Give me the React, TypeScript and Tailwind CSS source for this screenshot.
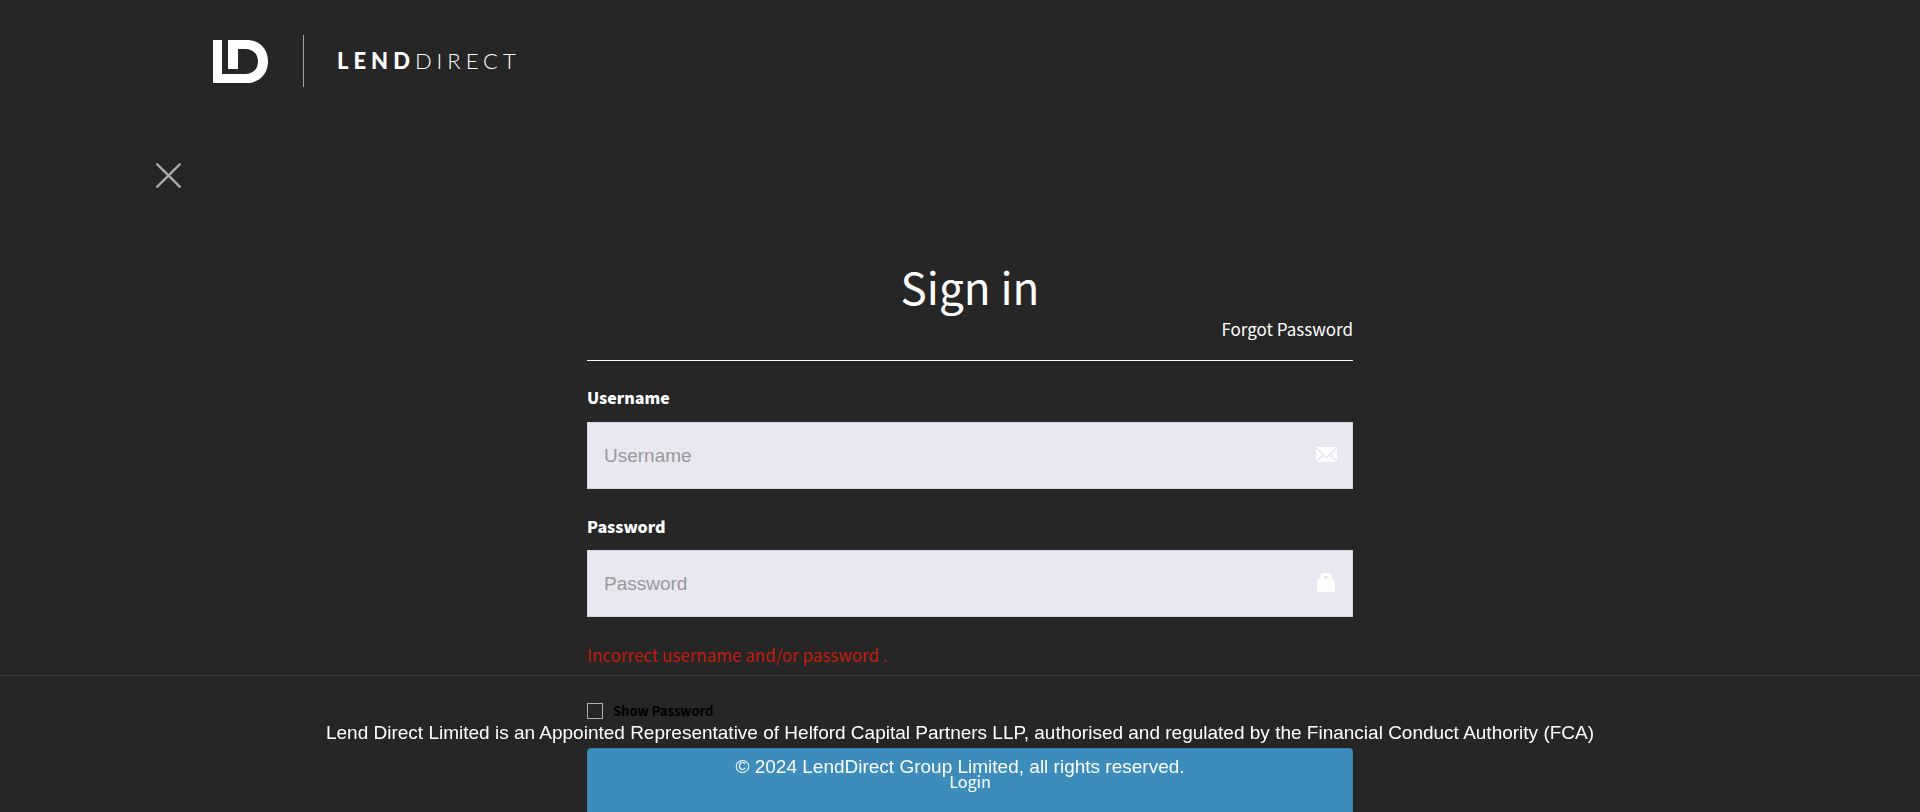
import { useState } from "react";

function Logo() {
  return (
    <a href="#home" aria-label="LendDirect home" className="flex items-center text-white">
      <svg width="55" height="43" viewBox="0 0 55 43" fill="currentColor" aria-hidden="true">
        <path d="M0 0H9V34H32C40 34 45 29 45 21.500C45 14 40 9 32 9H25V29H15V0H33.500C46.500 0 55 9 55 21.500C55 34 46.500 43 33.500 43H0Z" />
      </svg>
      <span className="ml-[35px] h-[52px] w-px bg-[#a0a0a0]" />
      <span className="ml-[33px] flex font-['Lato',sans-serif] text-[22px] leading-8">
        <span className="font-black tracking-[5px]">LEND</span>
        <span className="font-light tracking-[5px]">DIRECT</span>
      </span>
    </a>
  );
}

function MailIcon() {
  return (
    <svg width="21" height="15" viewBox="0 0 21 15" aria-hidden="true">
      <path d="M0.500 0H20.500L10.500 9.500Z M0 1.800L6.300 7.700L0 13.500Z M21 1.800L14.700 7.700L21 13.500Z M7.300 8.700L10.500 11.700L13.700 8.700L20.500 15H0.500Z" fill="white" />
    </svg>
  );
}

function LockIcon() {
  return (
    <svg width="18" height="19" viewBox="0 0 18 19" aria-hidden="true">
      <path fillRule="evenodd" d="M3 6V3.500Q3 0 6.500 0H11.500Q15 0 15 3.500V6H16.500Q18 6 18 7.500V17.500Q18 19 16.500 19H1.500Q0 19 0 17.500V7.500Q0 6 1.500 6ZM7 3Q7 3 7 3.500V6H11V3.500Q11 3 10.500 3Z" fill="white" />
    </svg>
  );
}

const inputClass =
  "h-[67px] w-full border border-[#d2d6de] bg-[#e8e8f3] pr-14 pl-4 font-['Liberation_Sans',Arial,sans-serif] text-[19px] text-[#333] outline-none placeholder:text-[#999]";

export default function App() {
  const [show, setShow] = useState(false);
  return (
    <div className="min-h-screen bg-[#262626] font-['Noto_Sans_CJK_SC',sans-serif] text-white">
      <header className="pt-[35px] pl-[213px]">
        <Logo />
      </header>
      <main className="pt-[76px]">
        <button type="button" aria-label="Close" className="ml-[156px] block">
          <svg width="25" height="25" viewBox="0 0 25 25" stroke="#a8a8a8" strokeWidth="2.5" strokeLinecap="round" aria-hidden="true">
            <path d="M1.300 1.300L23.700 23.700M23.700 1.300L1.300 23.700" />
          </svg>
        </button>
        <div className="pt-[69px] pl-5">
          <form className="mx-auto flex max-w-[766px] flex-col" onSubmit={(e) => e.preventDefault()}>
            <h1 className="text-center text-[44px] leading-[58px]">Sign in</h1>
            <div className="flex justify-end border-b border-white pb-[17px]">
              <a href="#forgot" className="text-[17px] leading-7">Forgot Password</a>
            </div>
            <label htmlFor="username" className="mt-[22px] mb-[11px] text-[16px] leading-7 font-black">Username</label>
            <div className="relative">
              <input id="username" type="text" placeholder="Username" className={inputClass} />
              <span className="pointer-events-none absolute top-[25px] right-4"><MailIcon /></span>
            </div>
            <label htmlFor="password" className="mt-[23px] mb-2.5 text-[16px] leading-7 font-black">Password</label>
            <div className="relative">
              <input id="password" type={show ? "text" : "password"} placeholder="Password" className={inputClass} />
              <span className="pointer-events-none absolute top-[23px] right-[18px]"><LockIcon /></span>
            </div>
            <p role="alert" className="mt-6 text-[17px] leading-7 text-[#c11c0a]">Incorrect username and/or password .</p>
            <div className="mt-[30px] flex items-center gap-2.5">
              <input
                id="show"
                type="checkbox"
                checked={show}
                onChange={(e) => setShow(e.target.checked)}
                className="size-4 appearance-none border border-[#b0b0b0] checked:bg-[#3c8dbc]"
              />
              <label htmlFor="show" className="text-[13px] leading-6 font-bold text-black">Show Password</label>
            </div>
            <button type="submit" className="mt-[25px] h-16 rounded-t-[4px] border border-b-0 border-[#367fa9] bg-[#3c8dbc] text-[16px]">
              Login
            </button>
          </form>
        </div>
      </main>
      <footer className="pointer-events-none fixed inset-x-0 bottom-0 border-t border-[#3c3c3c] pt-10 pb-7 text-center font-['Liberation_Sans',Arial,sans-serif] text-[19px] leading-[34px]">
        <p>Lend Direct Limited is an Appointed Representative of Helford Capital Partners LLP, authorised and regulated by the Financial Conduct Authority (FCA)</p>
        <p>© 2024 LendDirect Group Limited, all rights reserved.</p>
      </footer>
    </div>
  );
}
